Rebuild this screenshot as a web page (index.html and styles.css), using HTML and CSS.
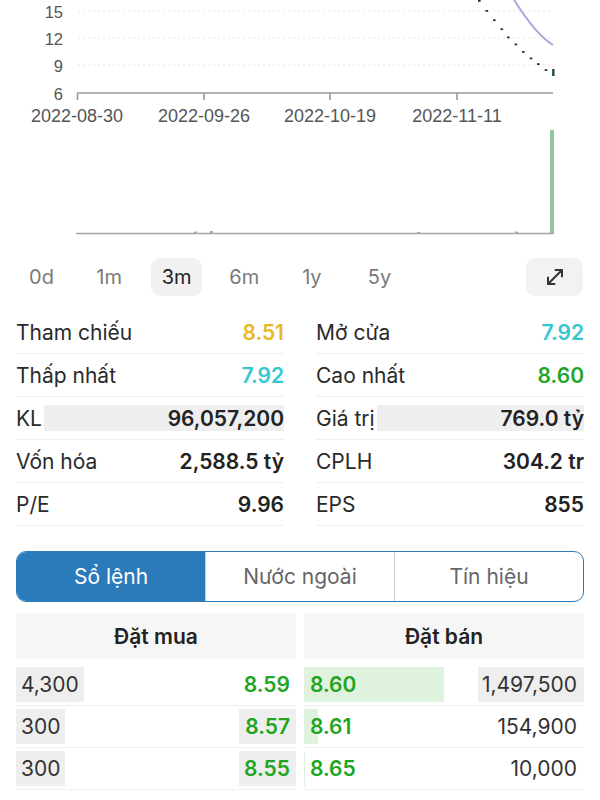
FILE: index.html
```html
<!DOCTYPE html>
<html lang="vi">
<head>
<meta charset="utf-8">
<title>Chart</title>
<link rel="stylesheet" href="styles.css">
</head>
<body>
<div class="chart">
  <svg width="600" height="250" viewBox="0 0 600 250">
    <g class="grid">
      <line x1="78" y1="11" x2="553" y2="11"/>
      <line x1="78" y1="38" x2="553" y2="38"/>
      <line x1="78" y1="65" x2="553" y2="65"/>
    </g>
    <g class="ylab">
      <text x="63" y="17.5">15</text>
      <text x="63" y="45">12</text>
      <text x="63" y="72">9</text>
      <text x="63" y="100">6</text>
    </g>
    <g class="axis">
      <line x1="77" y1="93" x2="553" y2="93"/>
      <line x1="77.5" y1="93" x2="77.5" y2="100"/>
      <line x1="204" y1="93" x2="204" y2="100"/>
      <line x1="330" y1="93" x2="330" y2="100"/>
      <line x1="457" y1="93" x2="457" y2="100"/>
    </g>
    <g class="xlab">
      <text x="77" y="122">2022-08-30</text>
      <text x="204" y="122">2022-09-26</text>
      <text x="330" y="122">2022-10-19</text>
      <text x="457" y="122">2022-11-11</text>
    </g>
    <path class="ma" d="M513 -2 Q535 34 553 45"/>
    <g class="dots">
      <rect x="478" y="0" width="2.6" height="1.8"/>
      <rect x="485.5" y="10" width="2.6" height="1.8"/>
      <rect x="493" y="19.3" width="2.6" height="1.8"/>
      <rect x="500.5" y="28.3" width="2.6" height="1.8"/>
      <rect x="507" y="36.5" width="2.6" height="1.8"/>
      <rect x="514.5" y="43.5" width="2.6" height="1.8"/>
      <rect x="522" y="51" width="2.6" height="1.8"/>
      <rect x="529.7" y="57.5" width="2.6" height="1.8"/>
      <rect x="537" y="63.2" width="2.6" height="1.8"/>
      <rect x="544.7" y="69.2" width="2.6" height="1.8"/>
    </g>
    <rect class="candle" x="552" y="69" width="2.6" height="7"/>
    <g class="vol">
      <rect x="194" y="231.5" width="3" height="2"/>
      <rect x="210" y="231" width="3" height="2.5"/>
      <rect x="417" y="232" width="3" height="1.5"/>
      <rect x="515" y="231.5" width="3" height="2"/>
    </g>
    <rect class="volbar" x="550" y="130" width="4" height="104"/>
    <line class="vbase" x1="76" y1="233.5" x2="554" y2="233.5"/>
  </svg>
</div>

<div class="periods">
  <button class="per">0d</button>
  <button class="per">1m</button>
  <button class="per active">3m</button>
  <button class="per">6m</button>
  <button class="per">1y</button>
  <button class="per">5y</button>
  <button class="expand" aria-label="Mở rộng">
    <svg width="22" height="22" viewBox="0 0 22 22">
      <path d="M4 18 L18 4 M11.5 4 H18 V10.5 M4 11.5 V18 H10.5"/>
    </svg>
  </button>
</div>

<div class="stats">
  <div class="row"><span class="lbl">Tham chiếu</span><span class="val yellow">8.51</span></div>
  <div class="row"><span class="lbl">Mở cửa</span><span class="val cyan">7.92</span></div>
  <div class="row"><span class="lbl">Thấp nhất</span><span class="val cyan">7.92</span></div>
  <div class="row"><span class="lbl">Cao nhất</span><span class="val green">8.60</span></div>
  <div class="row"><span class="lbl">KL</span><span class="val fill">96,057,200</span></div>
  <div class="row"><span class="lbl">Giá trị</span><span class="val fill">769.0 tỷ</span></div>
  <div class="row"><span class="lbl">Vốn hóa</span><span class="val">2,588.5 tỷ</span></div>
  <div class="row"><span class="lbl">CPLH</span><span class="val">304.2 tr</span></div>
  <div class="row"><span class="lbl">P/E</span><span class="val">9.96</span></div>
  <div class="row"><span class="lbl">EPS</span><span class="val">855</span></div>
</div>

<div class="tabs">
  <div class="tab active">Sổ lệnh</div>
  <div class="tab">Nước ngoài</div>
  <div class="tab">Tín hiệu</div>
</div>

<div class="book">
  <div class="side buy">
    <div class="head">Đặt mua</div>
    <div class="orow">
      <span class="cell qty" style="--w:68px">4,300</span>
      <span class="cell px" style="--w:0px">8.59</span>
    </div>
    <div class="orow">
      <span class="cell qty" style="--w:49px">300</span>
      <span class="cell px" style="--w:57px">8.57</span>
    </div>
    <div class="orow">
      <span class="cell qty" style="--w:49px">300</span>
      <span class="cell px" style="--w:57px">8.55</span>
    </div>
  </div>
  <div class="side sell">
    <div class="head">Đặt bán</div>
    <div class="orow">
      <span class="cell px" style="--w:140px">8.60</span>
      <span class="cell qty" style="--w:106px">1,497,500</span>
    </div>
    <div class="orow">
      <span class="cell px" style="--w:14px">8.61</span>
      <span class="cell qty" style="--w:0px">154,900</span>
    </div>
    <div class="orow">
      <span class="cell px" style="--w:1px">8.65</span>
      <span class="cell qty" style="--w:0px">10,000</span>
    </div>
  </div>
</div>
</body>
</html>
```

FILE: styles.css
```css
* { box-sizing: border-box; }
body {
  margin: 0;
  width: 600px;
  background: #fff;
  font-family: Inter, "Noto Sans", "Liberation Sans", sans-serif;
  color: #222;
}

/* chart */
.chart svg { display: block; }
.grid line { stroke: #e6e6e6; stroke-width: 1; stroke-dasharray: 2 3; }
.ylab text {
  font-family: "Liberation Sans", Arial, sans-serif;
  font-size: 16.5px; fill: #555; text-anchor: end;
}
.xlab text {
  font-family: "Liberation Sans", Arial, sans-serif;
  font-size: 18px; fill: #555; text-anchor: middle;
}
.axis line { stroke: #9a9a9a; stroke-width: 1.6; }
.ma { fill: none; stroke: #a6abd9; stroke-width: 2; }
.dots rect { fill: #3b2b2b; }
.candle { fill: #2f5a3c; }
.vol rect { fill: #aaa; }
.volbar { fill: #93c4a3; }
.vbase { stroke: #a3a3a3; stroke-width: 1.5; }

/* periods */
.periods {
  display: flex;
  align-items: center;
  gap: 16.6px;
  padding: 8px 16px 0 16px;
}
.per {
  width: 51px;
  height: 38px;
  border: 0;
  border-radius: 9px;
  background: transparent;
  font-family: inherit;
  font-size: 20px;
  color: #7a7a7a;
  padding: 0;
}
.per.active { background: #f1f1f1; color: #222; }
.expand {
  margin-left: auto;
  margin-right: 1px;
  width: 57px;
  height: 38px;
  border: 0;
  border-radius: 9px;
  background: #f2f2f2;
  display: flex;
  align-items: center;
  justify-content: center;
  padding: 0;
}
.expand path { fill: none; stroke: #333; stroke-width: 2; stroke-linecap: round; stroke-linejoin: round; }

/* stats */
.stats {
  display: grid;
  grid-template-columns: 1fr 1fr;
  column-gap: 32px;
  padding: 0 16px;
  margin-top: 15px;
}
.row {
  height: 43px;
  display: flex;
  align-items: center;
  justify-content: space-between;
  border-bottom: 1px solid #efefef;
  font-size: 21px;
}
.lbl { color: #2a2a2a; white-space: nowrap; }
.val { font-weight: 600; color: #222; white-space: nowrap; }
.val.yellow { color: #e8b923; }
.val.cyan { color: #33c7d2; }
.val.green { color: #1ea72a; }
.val.fill {
  flex: 1;
  margin-left: 2px;
  height: 26px;
  background: #efefef;
  display: flex;
  align-items: center;
  justify-content: flex-end;
}

/* tabs */
.tabs {
  display: flex;
  margin: 25px 16px 0 16px;
  height: 51px;
  border: 1.5px solid #2c7bb9;
  border-radius: 10px;
  overflow: hidden;
}
.tab {
  flex: 1;
  display: flex;
  align-items: center;
  justify-content: center;
  font-size: 21px;
  color: #666;
  border-left: 1px solid #c4cdd6;
}
.tab:first-child { border-left: 0; }
.tab.active { background: #2b7bba; color: #fff; }

/* order book */
.book {
  display: grid;
  grid-template-columns: 1fr 1fr;
  column-gap: 8px;
  padding: 0 16px;
  margin-top: 11px;
}
.head {
  height: 46px;
  background: #f6f6f6;
  display: flex;
  align-items: center;
  justify-content: center;
  font-size: 21px;
  font-weight: 600;
  color: #222;
  margin-bottom: 5px;
}
.orow {
  height: 42px;
  display: flex;
  border-bottom: 1px solid #f0f0f0;
  font-size: 21px;
}
.cell {
  flex: 1;
  display: flex;
  align-items: center;
  background-repeat: no-repeat;
  background-size: var(--w) 35px;
}
.qty { color: #333; background-image: linear-gradient(#eeeeee, #eeeeee); }
.px { color: #1fa51f; font-weight: 600; }
.buy .qty { background-position: left center; padding-left: 5px; }
.buy .px { background-position: right center; justify-content: flex-end; padding-right: 6px; background-image: linear-gradient(#eeeeee, #eeeeee); }
.sell .px { background-position: left center; padding-left: 6px; background-image: linear-gradient(#def2de, #def2de); }
.sell .qty { background-position: right center; justify-content: flex-end; padding-right: 7px; }
```
